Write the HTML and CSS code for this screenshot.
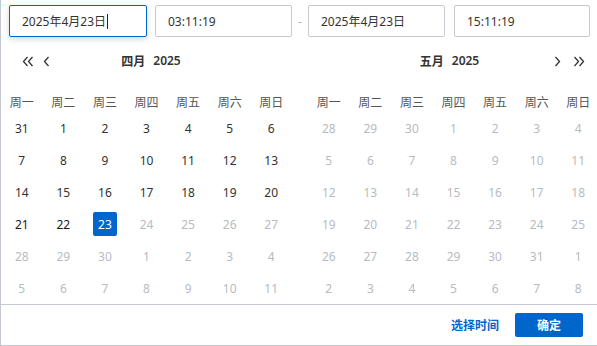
FILE: index.html
```html
<!DOCTYPE html>
<html lang="zh">
<head>
<meta charset="utf-8">
<link rel="stylesheet" href="styles.css">
</head>
<body>
<div class="panel">
  <div class="inputs">
    <div class="inp inp-date focused">2025年4月23日<span class="caret"></span></div>
    <div class="inp inp-time">03:11:19</div>
    <div class="dash">-</div>
    <div class="inp inp-date">2025年4月23日</div>
    <div class="inp inp-time2">15:11:19</div>
  </div>
  <div class="cals">
    <div class="cal">
      <div class="head">
        <div class="arrows left">
          <svg width="12" height="11" viewBox="0 0 12 11"><path d="M5.5 1 L1.5 5.5 L5.5 10 M10.5 1 L6.5 5.5 L10.5 10" fill="none" stroke="#333" stroke-width="1.3"/></svg>
          <svg class="single" width="7" height="11" viewBox="0 0 7 11"><path d="M5.5 1 L1.5 5.5 L5.5 10" fill="none" stroke="#333" stroke-width="1.3"/></svg>
        </div>
        <div class="title t-left"><span>四月</span><span>2025</span></div>
        <div></div>
      </div>
      <div class="week"><span>周一</span><span>周二</span><span>周三</span><span>周四</span><span>周五</span><span>周六</span><span>周日</span></div>
      <div class="days">
        <span>31</span><span>1</span><span>2</span><span>3</span><span>4</span><span>5</span><span>6</span>
        <span>7</span><span>8</span><span>9</span><span>10</span><span>11</span><span>12</span><span>13</span>
        <span>14</span><span>15</span><span>16</span><span>17</span><span>18</span><span>19</span><span>20</span>
        <span class="dark">21</span><span class="dark">22</span><span><b class="sel">23</b></span><span class="off">24</span><span class="off">25</span><span class="off">26</span><span class="off">27</span>
        <span class="off">28</span><span class="off">29</span><span class="off">30</span><span class="off">1</span><span class="off">2</span><span class="off">3</span><span class="off">4</span>
        <span class="off">5</span><span class="off">6</span><span class="off">7</span><span class="off">8</span><span class="off">9</span><span class="off">10</span><span class="off">11</span>
      </div>
    </div>
    <div class="cal">
      <div class="head">
        <div></div>
        <div class="title t-right"><span>五月</span><span>2025</span></div>
        <div class="arrows right">
          <svg class="single" width="7" height="11" viewBox="0 0 7 11"><path d="M1.5 1 L5.5 5.5 L1.5 10" fill="none" stroke="#333" stroke-width="1.3"/></svg>
          <svg width="12" height="11" viewBox="0 0 12 11"><path d="M1.5 1 L5.5 5.5 L1.5 10 M6.5 1 L10.5 5.5 L6.5 10" fill="none" stroke="#333" stroke-width="1.3"/></svg>
        </div>
      </div>
      <div class="week"><span>周一</span><span>周二</span><span>周三</span><span>周四</span><span>周五</span><span>周六</span><span>周日</span></div>
      <div class="days all-off">
        <span>28</span><span>29</span><span>30</span><span>1</span><span>2</span><span>3</span><span>4</span>
        <span>5</span><span>6</span><span>7</span><span>8</span><span>9</span><span>10</span><span>11</span>
        <span>12</span><span>13</span><span>14</span><span>15</span><span>16</span><span>17</span><span>18</span>
        <span>19</span><span>20</span><span>21</span><span>22</span><span>23</span><span>24</span><span>25</span>
        <span>26</span><span>27</span><span>28</span><span>29</span><span>30</span><span>31</span><span>1</span>
        <span>2</span><span>3</span><span>4</span><span>5</span><span>6</span><span>7</span><span>8</span>
      </div>
    </div>
  </div>
  <div class="footer">
    <span class="link">选择时间</span>
    <span class="btn">确定</span>
  </div>
</div>
</body>
</html>
```

FILE: styles.css
```css
html, body {
  margin: 0;
  padding: 0;
  overflow: hidden;
  background: #fff;
}
body {
  font-family: "Noto Sans", "Noto Sans CJK SC", sans-serif;
  font-size: 12px;
  color: #333;
}
.panel {
  width: 598px;
  border-left: 1px solid #c3c7cf;
  border-right: 1px solid #c3c7cf;
  border-bottom: 1px solid #c3c7cf;
  background: #fff;
}
.inputs {
  display: flex;
  align-items: center;
  padding: 5px 0 0 8px;
  height: 32px;
}
.inp {
  box-sizing: border-box;
  height: 32px;
  border: 1px solid #c6cad1;
  border-radius: 2px;
  display: flex;
  align-items: center;
  padding-left: 12px;
  color: #333;
  background: #fff;
}
.inputs .inp:nth-child(1) { width: 138px; margin-right: 8px; }
.inp-time { width: 137px; }
.dash {
  width: 16px;
  text-align: center;
  color: #b0b4bb;
}
.inputs .inp:nth-child(4) { width: 137px; margin-right: 9px; }
.inp-time2 { width: 136px; }
.focused {
  border-color: #0066cc;
  box-shadow: 0 2px 6px rgba(0, 0, 0, 0.16);
}
.caret {
  display: inline-block;
  width: 0;
  height: 15px;
  border-left: 1px solid #222;
  margin-left: 1px;
}
.cals {
  display: flex;
  gap: 16px;
}
.cal {
  width: 291px;
}
.head {
  display: grid;
  grid-template-columns: 1fr auto 1fr;
  align-items: center;
  height: 30px;
  margin-top: 9px;
}
.arrows {
  display: flex;
  align-items: center;
  gap: 9px;
}
.arrows svg { display: block; }
.arrows.left { padding-left: 21px; }
.arrows.right { justify-content: flex-end; padding-right: 14px; gap: 12px; }
.title {
  font-weight: 600;
  color: #333;
  display: flex;
  gap: 8px;
}
.t-left { margin-left: 9px; }
.t-right { margin-right: 8px; }
.week {
  display: grid;
  grid-template-columns: repeat(7, 1fr);
  margin-top: 15px;
  height: 21px;
  padding-top: 4px;
  box-sizing: border-box;
  line-height: 16px;
  color: #555;
  text-align: center;
}
.days {
  display: grid;
  grid-template-columns: repeat(7, 1fr);
  grid-auto-rows: 32px;
  align-items: center;
  text-align: center;
  color: #333;
}
.days span {
  display: flex;
  align-items: center;
  justify-content: center;
  height: 32px;
}
.days .dark { color: #1a1a1a; }
.days .off, .all-off span { color: #b8bbc1; }
.sel {
  display: inline-flex;
  align-items: center;
  justify-content: center;
  width: 24px;
  height: 24px;
  background: #0066cc;
  color: #fff;
  border-radius: 2px;
  font-weight: 400;
}
.footer {
  border-top: 1px solid #c3c7cf;
  height: 40px;
  display: flex;
  align-items: center;
  justify-content: flex-end;
  gap: 16px;
  padding-right: 16px;
}
.link {
  color: #0066cc;
  font-weight: 600;
}
.btn {
  width: 68px;
  height: 24px;
  background: #0066cc;
  color: #fff;
  font-weight: 700;
  border-radius: 2px;
  display: flex;
  align-items: center;
  justify-content: center;
}
```
